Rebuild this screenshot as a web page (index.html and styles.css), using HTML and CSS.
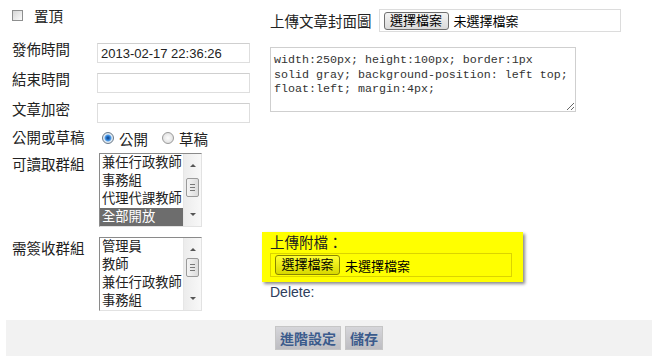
FILE: index.html
```html
<!DOCTYPE html>
<html lang="zh-Hant">
<head>
  <meta charset="UTF-8">
  <title>文章設定</title>
  <link rel="stylesheet" href="styles.css">
</head>
<body>

  <form class="form">
    <div class="col-left">
      <div class="check-row">
        <span class="checkbox"></span>
        <span>置頂</span>
      </div>

      <div class="field first">
        <label class="lbl">發佈時間</label>
        <input type="text" class="txt" value="2013-02-17 22:36:26">
      </div>
      <div class="field">
        <label class="lbl">結束時間</label>
        <input type="text" class="txt">
      </div>
      <div class="field">
        <label class="lbl">文章加密</label>
        <input type="text" class="txt">
      </div>

      <div class="radio-row">
        <span class="lbl">公開或草稿</span>
        <span class="radio checked"></span><span class="radio-txt">公開</span>
        <span class="radio"></span><span class="radio-txt">草稿</span>
      </div>

      <div class="list-row">
        <span class="lbl">可讀取群組</span>
        <div class="listbox">
          <div class="options">
            <div>兼任行政教師</div>
            <div>事務組</div>
            <div>代理代課教師</div>
            <div class="sel">全部開放</div>
          </div>
          <div class="scrollbar">
            <span class="arr up"></span>
            <span class="thumb thumb-a"></span>
            <span class="arr down"></span>
          </div>
        </div>
      </div>

      <div class="list-row second">
        <span class="lbl">需簽收群組</span>
        <div class="listbox">
          <div class="options">
            <div>管理員</div>
            <div>教師</div>
            <div>兼任行政教師</div>
            <div>事務組</div>
          </div>
          <div class="scrollbar">
            <span class="arr up"></span>
            <span class="thumb thumb-b"></span>
            <span class="arr down"></span>
          </div>
        </div>
      </div>
    </div>

    <div class="col-right">
      <div class="cover-row">
        <span>上傳文章封面圖</span>
        <div class="filebox">
          <span class="file-btn">選擇檔案</span>
          <span class="file-none">未選擇檔案</span>
        </div>
      </div>

      <textarea class="style-box">width:250px; height:100px; border:1px solid gray; background-position: left top; float:left; margin:4px;</textarea>

      <div class="attach">
        <div class="attach-title">上傳附檔：</div>
        <div class="filebox yellow">
          <span class="file-btn">選擇檔案</span>
          <span class="file-none">未選擇檔案</span>
        </div>
      </div>
      <div class="delete">Delete:</div>
    </div>
  </form>

  <div class="actions">
    <button type="button">進階設定</button>
    <button type="button">儲存</button>
  </div>

</body>
</html>
```

FILE: styles.css
```css
body {
  font-family: "Liberation Sans", "Noto Sans CJK TC", sans-serif;
  font-size: 14.5px;
  color: #222;
  margin: 0;
  background: #fff;
}
.form {
  display: flex;
}
.col-left {
  width: 250px;
  padding-left: 12px;
}
.col-right {
  padding-left: 8px;
}
.lbl {
  display: inline-block;
  width: 85px;
  line-height: 20px;
}

/* checkbox */
.check-row {
  display: flex;
  align-items: center;
  gap: 11px;
  height: 31px;
}
.checkbox {
  width: 9px;
  height: 9px;
  border: 1px solid #8e8f8f;
  background: linear-gradient(135deg, #d6d6d6, #fbfbfb);
}

/* text fields */
.field {
  display: flex;
  align-items: flex-start;
  height: 20px;
  margin-top: 10px;
}
.field.first {
  margin-top: 12px;
}
.field .lbl {
  line-height: 14px;
}
.txt {
  width: 153px;
  height: 20px;
  box-sizing: border-box;
  border: 1px solid #dedede;
  border-top-color: #cfcfcf;
  padding: 0 3px;
  font-family: "Liberation Sans", sans-serif;
  font-size: 13px;
  color: #222;
}

/* radios */
.radio-row {
  display: flex;
  align-items: center;
  height: 20px;
  margin-top: 5px;
}
.radio {
  width: 10px;
  height: 10px;
  border-radius: 50%;
  border: 1px solid #9a9a9a;
  background: radial-gradient(circle, #fdfdfd, #d8d8d8);
  margin-left: 5px;
}
.radio + .radio-txt {
  margin-left: 5px;
}
.radio-txt + .radio {
  margin-left: 14px;
}
.radio.checked {
  border-color: #6a7a8a;
  background: radial-gradient(circle, #0d3e7e 0, #2a78d0 2px, #5aa3e8 3px, #e6eef6 4px, #cfd8e0 6px);
}

/* listboxes */
.list-row {
  display: flex;
  align-items: flex-start;
  margin-top: 5px;
}
.list-row.second {
  margin-top: 10px;
}
.list-row .lbl {
  width: 87px;
  padding-top: 2px;
}
.listbox {
  display: flex;
  width: 103px;
  height: 74px;
  box-sizing: border-box;
  border: 1px solid #e2e2e2;
  border-top-color: #8a8a8a;
  border-left-color: #8a8a8a;
  font-size: 13.3px;
  line-height: 18px;
}
.options {
  flex: 1;
  overflow: hidden;
  white-space: nowrap;
}
.options div {
  padding-left: 2px;
  height: 18px;
}
.options .sel {
  background: #6d6d6d;
  color: #fff;
}
.scrollbar {
  position: relative;
  width: 17px;
  background: linear-gradient(90deg, #ececec, #f8f8f8);
  border-left: 1px solid #e6e6e6;
}
.arr {
  position: absolute;
  left: 6px;
  width: 0;
  height: 0;
  border-left: 3px solid transparent;
  border-right: 3px solid transparent;
}
.arr.up {
  top: 10px;
  border-bottom: 3px solid #555;
}
.arr.down {
  bottom: 10px;
  border-top: 3px solid #555;
}
.thumb {
  position: absolute;
  left: 2px;
  width: 11px;
  height: 17px;
  border: 1px solid #9a9a9a;
  border-radius: 2px;
  background:
    linear-gradient(#777, #777) 3px 5px / 5px 1px no-repeat,
    linear-gradient(#777, #777) 3px 8px / 5px 1px no-repeat,
    linear-gradient(#777, #777) 3px 11px / 5px 1px no-repeat,
    linear-gradient(90deg, #f4f4f4, #dcdcdc);
}
.thumb-a {
  top: 24px;
}
.thumb-b {
  top: 20px;
}

/* right column */
.cover-row {
  display: flex;
  align-items: center;
  gap: 7px;
  margin-top: 9px;
  height: 23px;
}
.filebox {
  display: flex;
  align-items: center;
  width: 242px;
  height: 23px;
  box-sizing: border-box;
  border: 1px solid #dcdcdc;
  padding-left: 4px;
  font-size: 13px;
}
.file-btn {
  display: inline-block;
  width: 65px;
  height: 18px;
  box-sizing: border-box;
  line-height: 16px;
  text-align: center;
  border: 1px solid #707070;
  border-radius: 3px;
  background: linear-gradient(#f4f4f4, #dadada);
  color: #000;
}
.file-none {
  margin-left: 5px;
  color: #000;
}
.style-box {
  display: block;
  width: 306px;
  height: 65px;
  box-sizing: border-box;
  margin: 15px 0 0;
  padding: 5px 4px 3px 3px;
  border: 1px solid #cfcfcf;
  font-family: "Liberation Mono", monospace;
  font-size: 11.67px;
  line-height: 14.5px;
  color: #333;
  resize: vertical;
}

/* yellow attachment box */
.attach {
  width: 261px;
  height: 50px;
  box-sizing: border-box;
  margin: 120px 0 0 -8px;
  padding: 2px 0 0 8px;
  background: #ffff00;
  box-shadow: 2px 2px 3px #8a8a8a;
}
.attach-title {
  line-height: 19px;
  color: #222;
}
.filebox.yellow {
  height: 24px;
  border-color: #dcd400;
}
.filebox.yellow .file-btn {
  height: 20px;
  line-height: 18px;
  border-color: #8a8600;
  background: linear-gradient(#ffff30, #d8d800);
}
.delete {
  margin-top: 1px;
  line-height: 18px;
  font-size: 14px;
  color: #2e3d5c;
}

/* action bar */
.actions {
  display: flex;
  justify-content: center;
  gap: 4px;
  margin: 9px 2px 0 6px;
  padding: 6px 0;
  background: #f2f2f2;
}
.actions button {
  height: 24px;
  padding: 0 4px;
  border: 1px solid #c6c6c6;
  background: linear-gradient(#d6d6da, #bdbdc2);
  font-family: "Noto Sans CJK TC", sans-serif;
  font-size: 14px;
  font-weight: bold;
  color: #3b5b8c;
  line-height: 20px;
}
```
